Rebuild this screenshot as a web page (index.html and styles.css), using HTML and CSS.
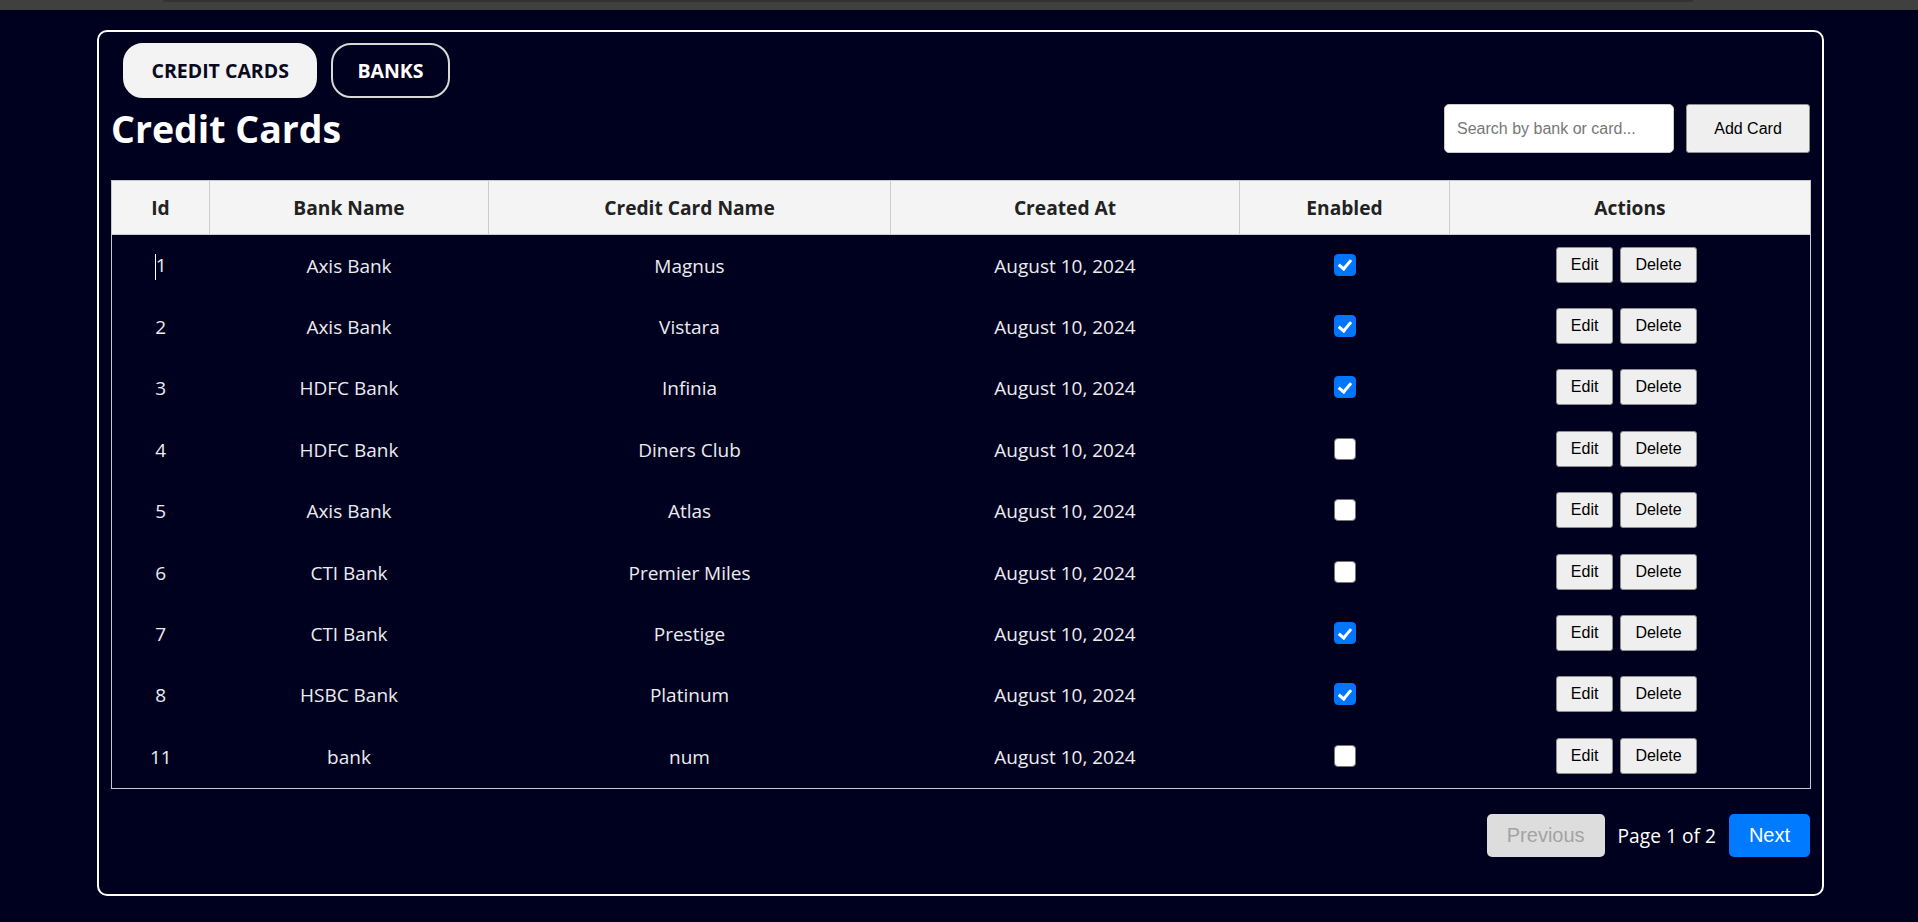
FILE: index.html
```html
<!DOCTYPE html>
<html lang="en">
<head>
<meta charset="utf-8">
<title>Credit Cards</title>
<link rel="stylesheet" href="styles.css">
</head>
<body>
<div class="topbar"><div class="topbar-seg"></div></div>
<div class="panel">
  <div class="tabs">
    <button class="tab tab-active">CREDIT CARDS</button>
    <button class="tab tab-narrow">BANKS</button>
  </div>
  <div class="head">
    <h1 class="title">Credit Cards</h1>
    <div class="tools">
      <input class="search" type="text" placeholder="Search by bank or card...">
      <button class="add-btn">Add Card</button>
    </div>
  </div>
  <table class="grid">
    <colgroup>
      <col class="c-id"><col class="c-bank"><col class="c-card"><col class="c-date"><col class="c-en"><col class="c-act">
    </colgroup>
    <thead>
      <tr><th>Id</th><th>Bank Name</th><th>Credit Card Name</th><th>Created At</th><th>Enabled</th><th>Actions</th></tr>
    </thead>
    <tbody>
      <tr><td><span class="caret"></span>1</td><td>Axis Bank</td><td>Magnus</td><td>August 10, 2024</td><td><input class="chk" type="checkbox" checked></td><td><div class="actions"><button class="act">Edit</button><button class="act">Delete</button></div></td></tr>
      <tr><td>2</td><td>Axis Bank</td><td>Vistara</td><td>August 10, 2024</td><td><input class="chk" type="checkbox" checked></td><td><div class="actions"><button class="act">Edit</button><button class="act">Delete</button></div></td></tr>
      <tr><td>3</td><td>HDFC Bank</td><td>Infinia</td><td>August 10, 2024</td><td><input class="chk" type="checkbox" checked></td><td><div class="actions"><button class="act">Edit</button><button class="act">Delete</button></div></td></tr>
      <tr><td>4</td><td>HDFC Bank</td><td>Diners Club</td><td>August 10, 2024</td><td><input class="chk" type="checkbox"></td><td><div class="actions"><button class="act">Edit</button><button class="act">Delete</button></div></td></tr>
      <tr><td>5</td><td>Axis Bank</td><td>Atlas</td><td>August 10, 2024</td><td><input class="chk" type="checkbox"></td><td><div class="actions"><button class="act">Edit</button><button class="act">Delete</button></div></td></tr>
      <tr><td>6</td><td>CTI Bank</td><td>Premier Miles</td><td>August 10, 2024</td><td><input class="chk" type="checkbox"></td><td><div class="actions"><button class="act">Edit</button><button class="act">Delete</button></div></td></tr>
      <tr><td>7</td><td>CTI Bank</td><td>Prestige</td><td>August 10, 2024</td><td><input class="chk" type="checkbox" checked></td><td><div class="actions"><button class="act">Edit</button><button class="act">Delete</button></div></td></tr>
      <tr><td>8</td><td>HSBC Bank</td><td>Platinum</td><td>August 10, 2024</td><td><input class="chk" type="checkbox" checked></td><td><div class="actions"><button class="act">Edit</button><button class="act">Delete</button></div></td></tr>
      <tr><td>11</td><td>bank</td><td>num</td><td>August 10, 2024</td><td><input class="chk" type="checkbox"></td><td><div class="actions"><button class="act">Edit</button><button class="act">Delete</button></div></td></tr>
    </tbody>
  </table>
  <div class="pager">
    <button class="pg-btn pg-prev" disabled>Previous</button>
    <span class="pg-info">Page 1 of 2</span>
    <button class="pg-btn pg-next">Next</button>
  </div>
</div>
</body>
</html>
```
FILE: styles.css
```css
html, body {
  margin: 0;
  padding: 0;
  background: #00001f;
}
body {
  font-family: "Open Sans", "Noto Sans", sans-serif;
  color: #ffffff;
  height: 922px;
  overflow: hidden;
}
.topbar {
  height: 10px;
  background: #404040;
}
.topbar-seg {
  margin-left: 163px;
  width: 1530px;
  height: 2px;
  background: #333333;
  border-bottom-left-radius: 3px;
}
.panel {
  box-sizing: border-box;
  margin: 20px 0 0 97px;
  width: 1727px;
  height: 866px;
  border: 2px solid #ffffff;
  border-radius: 10px;
  padding: 11px 12px 12px 12px;
}
.tabs {
  display: flex;
  gap: 14px;
  padding-left: 12px;
}
.tab {
  font-family: "Open Sans", "Noto Sans", sans-serif;
  font-weight: 700;
  font-size: 19.5px;
  height: 55px;
  padding: 0 26.5px;
  border-radius: 20px;
  border: 2px solid #d8d8d8;
  background: transparent;
  color: #ffffff;
  cursor: pointer;
}
.tab-narrow {
  padding: 0 24px;
}
.tab-active {
  background: #f3f3f3;
  border-color: #f3f3f3;
  color: #0a0a1e;
}
.head {
  display: flex;
  justify-content: space-between;
  align-items: center;
  margin-top: 6px;
  height: 49px;
}
.title {
  margin: 0;
  font-size: 37.5px;
  line-height: 49px;
  font-weight: 700;
  color: #ffffff;
}
.tools {
  display: flex;
  align-items: center;
  gap: 12px;
}
.search {
  box-sizing: border-box;
  width: 230px;
  height: 49px;
  border: 1px solid #cccccc;
  border-radius: 5px;
  padding: 0 12px;
  font-family: "Liberation Sans", Arial, sans-serif;
  font-size: 16px;
  background: #ffffff;
  color: #000;
}
.search::placeholder {
  color: #777777;
}
.add-btn {
  box-sizing: border-box;
  width: 124px;
  height: 49px;
  background: #efefef;
  border: 1px solid #8f8f8f;
  border-radius: 3px;
  font-family: "Liberation Sans", Arial, sans-serif;
  font-size: 16px;
  color: #000;
}
.grid {
  margin-top: 27px;
  width: 100%;
  table-layout: fixed;
  border-collapse: collapse;
  border: 1px solid #c8c8cc;
}
.c-id { width: 98px; }
.c-bank { width: 279px; }
.c-card { width: 402px; }
.c-date { width: 349px; }
.c-en { width: 210px; }
.c-act { width: 361px; }
.grid th {
  height: 53px;
  padding: 0;
  background: #f4f4f4;
  color: #222222;
  font-weight: 700;
  font-size: 19.2px;
  border-right: 1px solid #cccccc;
  border-bottom: 1px solid #cccccc;
  text-align: center;
}
.grid th:last-child {
  border-right: none;
}
.grid td {
  height: 61.4px;
  padding: 0;
  text-align: center;
  vertical-align: middle;
  font-size: 19px;
  color: #ececf0;
}
.caret {
  display: inline-block;
  width: 1px;
  height: 26px;
  background: #ffffff;
  vertical-align: middle;
}
.chk {
  appearance: none;
  -webkit-appearance: none;
  display: block;
  box-sizing: border-box;
  width: 22px;
  height: 22px;
  margin: -1px auto 1px;
  border: 1px solid #767676;
  border-radius: 4px;
  background: #ffffff;
  position: relative;
}
.chk:checked {
  background: #0075ff;
  border-color: #0075ff;
}
.chk:checked::after {
  content: "";
  position: absolute;
  left: 6.5px;
  top: 2.5px;
  width: 5px;
  height: 10px;
  border-right: 3px solid #ffffff;
  border-bottom: 3px solid #ffffff;
  transform: rotate(40deg);
}
.actions {
  display: flex;
  justify-content: center;
  align-items: center;
  gap: 7px;
  padding-right: 7px;
  margin-top: -2px;
}
.act {
  box-sizing: border-box;
  height: 36px;
  font-family: "Liberation Sans", Arial, sans-serif;
  font-size: 16px;
  color: #000;
  background: #efefef;
  border: 1px solid #8f8f8f;
  border-radius: 3px;
  padding: 0 14px;
}
.pager {
  display: flex;
  justify-content: flex-end;
  align-items: center;
  margin-top: 25px;
}
.pg-btn {
  font-family: "Liberation Sans", Arial, sans-serif;
  font-size: 20px;
  padding: 10px 20px;
  border: none;
  border-radius: 5px;
  height: 43px;
}
.pg-prev {
  background: #dddddd;
  color: #a3a3a3;
}
.pg-next {
  background: #007bff;
  color: #ffffff;
}
.pg-info {
  margin: 0 13px;
  font-size: 19.2px;
  color: #ffffff;
}
```
